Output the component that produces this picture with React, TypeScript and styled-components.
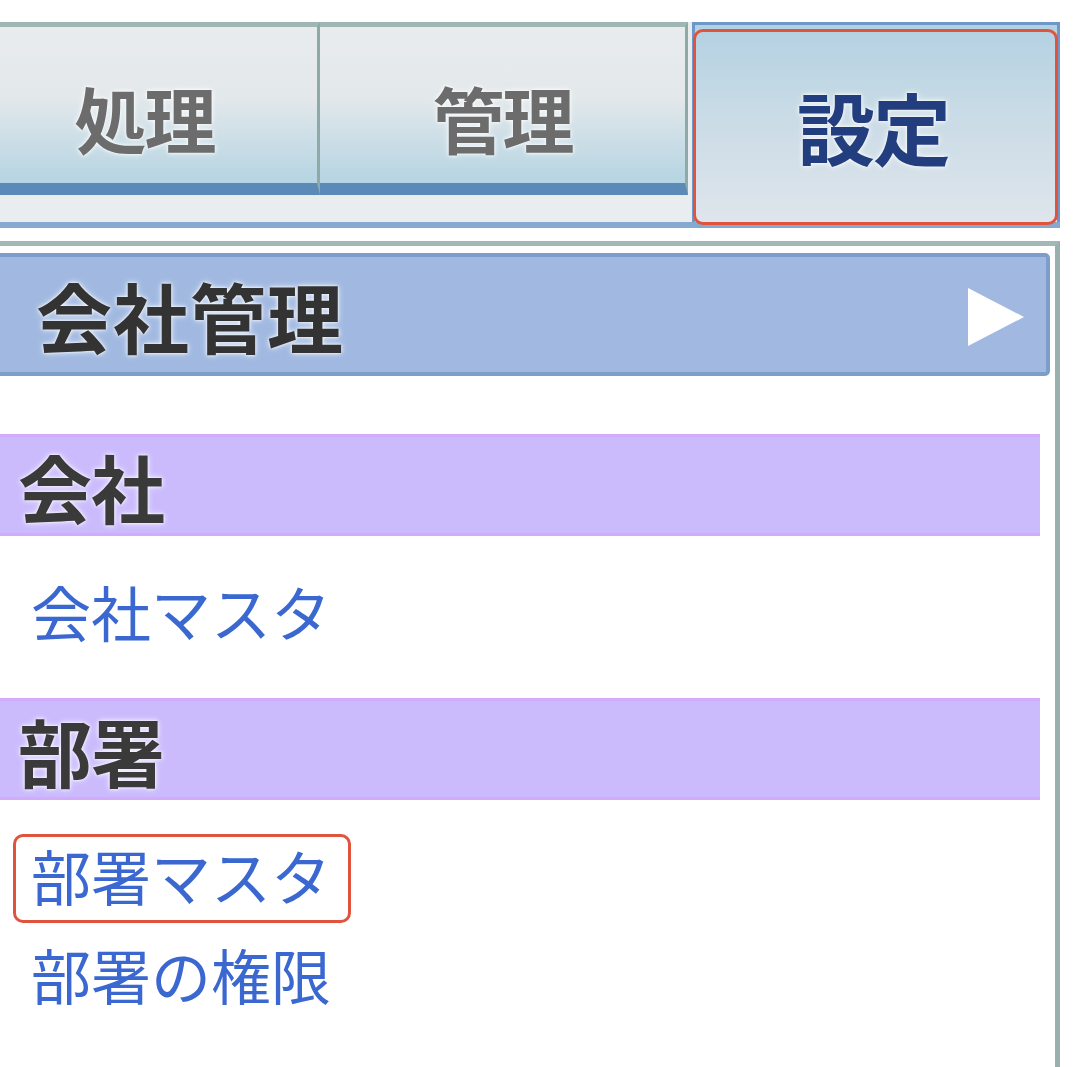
import React, { FunctionComponent } from 'react'
import styled, { createGlobalStyle, css } from 'styled-components'

const GlobalStyle = createGlobalStyle`
  html, body {
    margin: 0;
    padding: 0;
    background: #ffffff;
    overflow: hidden;
  }
  body {
    font-family: "Noto Sans CJK JP", "Noto Sans", sans-serif;
  }
`

// red annotation frame drawn over a highlighted element
const marked = css`
  position: relative;
  &::after {
    content: '';
    position: absolute;
    inset: var(--mark-inset, 0);
    border: 3px solid #e0533d;
    border-radius: 10px;
    pointer-events: none;
  }
`

const halo = css`
  text-shadow: 0 0 3px #ffffff, 0 0 6px rgba(255, 255, 255, 0.8);
`

const Page = styled.main`
  width: 1073px;
  height: 1067px;
  overflow: hidden;
  filter: blur(0.6px);
`

const TabBar = styled.nav`
  display: flex;
  align-items: flex-start;
  width: 1088px;
  height: 200px;
  margin: 22px 0 0 -28px;
  background: #e9edf0;
  border-bottom: 6px solid #86a9d0;
`

const Tab = styled.div<{ $width: number }>`
  box-sizing: border-box;
  width: ${({ $width }) => $width}px;
  height: 173px;
  display: flex;
  justify-content: center;
  align-items: center;
  padding-top: 22px;
  border-top: 5px solid #9fb6b4;
  border-right: 3px solid #8fa9a7;
  border-bottom: 12px solid #5b89b8;
  background: linear-gradient(#e8ecef 0%, #e3e8eb 45%, #b5d4e2 100%);
  color: #6c6c6c;
  font-size: 72px;
  font-weight: 700;
  letter-spacing: -2px;
  ${halo}
`

const ActiveTab = styled.div<{ $marked?: boolean }>`
  --mark-inset: 4px -1px -3px -2px;
  box-sizing: border-box;
  width: 368px;
  height: 200px;
  margin-left: 4px;
  display: flex;
  justify-content: center;
  align-items: center;
  padding: 4px 6px 0 0;
  border: 3px solid #6d97c6;
  border-bottom: none;
  background: linear-gradient(#b3d1e2 0%, #c9dbe6 45%, #dfe5ec 100%);
  color: #223e7f;
  font-size: 78px;
  font-weight: 700;
  letter-spacing: -2px;
  ${halo}
  ${({ $marked }) => $marked && marked}
`

const Panel = styled.section`
  box-sizing: border-box;
  width: 1060px;
  height: 840px;
  margin-top: 13px;
  padding: 7px 5px 0 0;
  border-top: 5px solid #a3b8b6;
  border-right: 5px solid #98b1ae;
  background: #ffffff;
`

const MenuHeader = styled.div`
  box-sizing: border-box;
  display: flex;
  justify-content: space-between;
  align-items: center;
  height: 123px;
  padding: 0 20px 0 36px;
  background: #a1b9e1;
  border: 4px solid #7d9ecb;
  border-left: none;
  border-radius: 0 5px 5px 0;
  color: #333333;
  font-size: 76px;
  font-weight: 700;
  letter-spacing: 1px;
  ${halo}
`

const Arrow = styled.svg`
  width: 60px;
  height: 62px;
  margin-top: 4px;
`

const SectionBar = styled.div`
  box-sizing: border-box;
  height: 102px;
  margin-right: 10px;
  padding-left: 18px;
  display: flex;
  align-items: center;
  background: #cbbbfd;
  border-top: 3px solid #d2acfb;
  border-bottom: 3px solid #d2acfb;
  color: #3a3a3a;
  font-size: 74px;
  font-weight: 700;
  letter-spacing: -1px;
  ${halo}
`

const FirstSection = styled(SectionBar)`
  margin-top: 58px;
`

const LinkGroup = styled.div`
  display: flex;
  flex-direction: column;
  align-items: flex-start;
  gap: 10px;
  padding: 34px 0 39px;
`

const MenuLink = styled.a<{ $marked?: boolean }>`
  box-sizing: border-box;
  height: 89px;
  line-height: 82px;
  padding: 0 20px 0 18px;
  margin-left: 13px;
  color: #3a68d0;
  font-size: 60px;
  text-decoration: none;
  cursor: pointer;
  ${({ $marked }) => $marked && marked}
`

const App: FunctionComponent = () => (
  <Page>
    <GlobalStyle />
    <TabBar>
      <Tab $width={348}>処理</Tab>
      <Tab $width={368}>管理</Tab>
      <ActiveTab $marked>設定</ActiveTab>
    </TabBar>
    <Panel>
      <MenuHeader>
        会社管理
        <Arrow viewBox="0 0 60 62">
          <polygon points="2,2 58,31 2,60" fill="#ffffff" />
        </Arrow>
      </MenuHeader>
      <FirstSection>会社</FirstSection>
      <LinkGroup>
        <MenuLink>会社マスタ</MenuLink>
      </LinkGroup>
      <SectionBar>部署</SectionBar>
      <LinkGroup>
        <MenuLink $marked>部署マスタ</MenuLink>
        <MenuLink>部署の権限</MenuLink>
      </LinkGroup>
    </Panel>
  </Page>
)

export default App
